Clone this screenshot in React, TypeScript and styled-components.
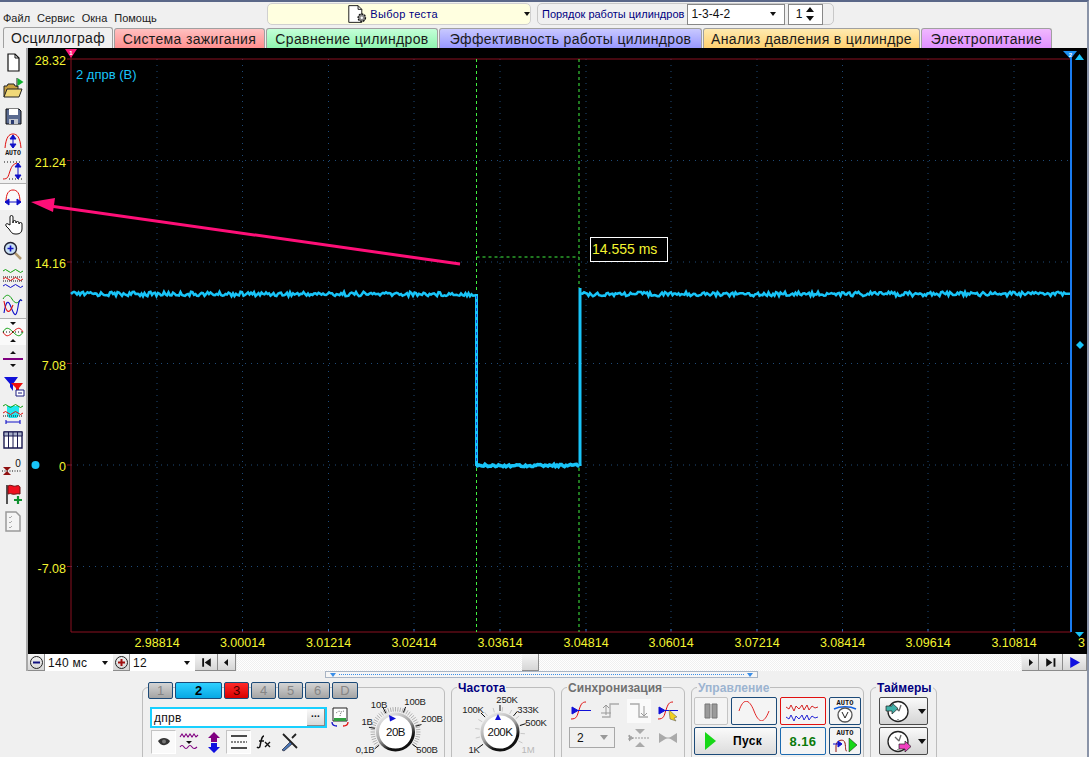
import { FC, ReactNode, useMemo } from "react";
import styled, { createGlobalStyle } from "styled-components";

const GlobalStyle = createGlobalStyle`
  html, body { margin: 0; padding: 0; background: #f0f0f0; }
  body { font-family: "Liberation Sans", Arial, sans-serif; }
`;

const Page = styled.div`
  width: 1089px;
  height: 757px;
  overflow: hidden;
  display: flex;
  flex-direction: column;
  background: #f0f0f0;
  border-top: 2px solid #5a6788;
  border-right: 2px solid #8a94a8;
  box-sizing: border-box;
  & > * {
    flex-shrink: 0;
  }
`;

/* ---------- top ---------- */
const TopBar = styled.div`
  height: 24px;
  padding-top: 1px;
  display: flex;
  box-sizing: content-box;
`;
const Menu = styled.div`
  width: 267px;
  padding: 9px 0 0 3px;
  box-sizing: border-box;
  display: flex;
  gap: 7px;
  font-size: 11px;
  color: #222;
`;
const TestSelect = styled.div`
  width: 264px;
  height: 22px;
  box-sizing: border-box;
  border: 1px solid #d0d0d0;
  border-radius: 5px;
  background: #ffffe0;
  display: flex;
  align-items: center;
  padding-left: 78px;
  gap: 2px;
  font-size: 11px;
  color: #000080;
  letter-spacing: 0.3px;
  white-space: nowrap;
`;
const Caret = styled.span<{ $left?: number; $big?: boolean; $color?: string }>`
  margin-left: ${(p) => p.$left ?? 0}px;
  width: 0;
  height: 0;
  border-left: ${(p) => (p.$big ? 4 : 3)}px solid transparent;
  border-right: ${(p) => (p.$big ? 4 : 3)}px solid transparent;
  border-top: ${(p) => (p.$big ? 5 : 4)}px solid ${(p) => p.$color ?? "#111"};
`;
const OrderBox = styled.div`
  margin-left: 6px;
  width: 297px;
  height: 22px;
  box-sizing: border-box;
  border: 1px solid #c8c8c8;
  border-radius: 5px;
  display: flex;
  align-items: center;
  padding-left: 4px;
  font-size: 11px;
  color: #000080;
  white-space: nowrap;
`;
const OrderField = styled.div<{ $w: number; $ml: number }>`
  width: ${(p) => p.$w}px;
  height: 21px;
  margin-left: ${(p) => p.$ml}px;
  box-sizing: border-box;
  border: 1px solid #888;
  background: #fff;
  display: flex;
  align-items: center;
  justify-content: space-between;
  padding: 0 8px 0 3px;
  color: #111;
  font-size: 12px;
`;
const SpinArrows = styled.svg`
  display: block;
`;

const TabRow = styled.div`
  height: 20px;
  display: flex;
  align-items: flex-end;
  padding-left: 3px;
  margin-top: 1px;
`;
const Tab = styled.div<{ $w: number; $from: string; $to: string; $active?: boolean }>`
  width: ${(p) => p.$w}px;
  height: ${(p) => (p.$active ? 21 : 20)}px;
  margin-right: 1px;
  box-sizing: border-box;
  border: 1px solid #a0a0a0;
  border-bottom: none;
  border-radius: 3px 3px 0 0;
  background: linear-gradient(${(p) => p.$from}, ${(p) => p.$to});
  display: flex;
  align-items: center;
  justify-content: center;
  font-size: 14px;
  letter-spacing: 0.35px;
  white-space: nowrap;
  color: #1a1a1a;
`;

/* ---------- middle ---------- */
const Body = styled.div`
  display: flex;
  height: 623px;
`;
const SideBar = styled.div`
  width: 28px;
  flex-shrink: 0;
  box-sizing: border-box;
  border-right: 2px solid #a8a8a8;
`;
const ToolButton = styled.div<{ $on?: boolean }>`
  width: 26px;
  height: 27px;
  box-sizing: border-box;
  display: flex;
  align-items: center;
  justify-content: center;
  ${(p) => p.$on && "background: #fafafa; border-top: 1px solid #b0b0b0;"}
`;
const Center = styled.div`
  width: 1059px;
  display: flex;
  flex-direction: column;
`;
const Plot = styled.svg`
  display: block;
  width: 1059px;
  height: 606px;
  flex-shrink: 0;
  background: #000;
  font-family: "Liberation Sans", Arial, sans-serif;
`;
const ScrollRow = styled.div`
  height: 17px;
  flex-shrink: 0;
  display: flex;
  background: #f0f0f0;
`;
const GrayBtn = styled.div<{ $w: number }>`
  width: ${(p) => p.$w}px;
  height: 17px;
  flex-shrink: 0;
  box-sizing: border-box;
  background: linear-gradient(#f4f4f4, #d6d6d6);
  border-right: 1px solid #8c8c8c;
  border-bottom: 1px solid #8c8c8c;
  display: flex;
  align-items: center;
  justify-content: center;
`;
const WhiteField = styled.div<{ $w: number }>`
  width: ${(p) => p.$w}px;
  height: 17px;
  flex-shrink: 0;
  box-sizing: border-box;
  background: #fff;
  display: flex;
  align-items: center;
  justify-content: space-between;
  padding: 0 5px 0 3px;
  font-size: 12px;
  color: #111;
  letter-spacing: 0.3px;
`;
const Track = styled.div`
  flex: 1;
  margin: 0 1px;
  display: flex;
  justify-content: flex-start;
  background-color: #fafafa;
  background-image: repeating-conic-gradient(#f0f0f0 0 25%, #fff 0 50%);
  background-size: 2px 2px;
  padding-left: 285px;
`;

/* ---------- bottom ---------- */
const Splitter = styled.div`
  margin-left: 325px;
  width: 433px;
  height: 7px;
  box-sizing: border-box;
  border: 1px solid #a8b4c4;
  background: #f6f6f6;
  display: flex;
  align-items: center;
  justify-content: space-between;
  padding: 0 4px;
`;
const SplitDots = styled.div`
  flex: 1;
  margin: 0 3px;
  border-top: 1px dotted #3a8ee8;
`;
const SplitTri = styled.span`
  width: 0;
  height: 0;
  border-left: 3px solid transparent;
  border-right: 3px solid transparent;
  border-top: 4px solid #3a8ee8;
`;
const Panels = styled.div`
  display: flex;
  gap: 6px;
  padding: 9px 0 0 142px;
`;
const Group = styled.div<{ $w: number }>`
  width: ${(p) => p.$w}px;
  height: 90px;
  box-sizing: border-box;
  border: 1px solid #bdbdbd;
  border-radius: 6px;
  flex-shrink: 0;
`;
const Legend = styled.div<{ $color: string }>`
  width: fit-content;
  margin: -6px 0 0 5px;
  padding: 0 1px;
  height: 13px;
  background: #f0f0f0;
  font-size: 12px;
  line-height: 13px;
  font-weight: bold;
  letter-spacing: 0.05px;
  color: ${(p) => p.$color};
`;
const ChannelBody = styled.div`
  display: flex;
`;
const ChannelLeft = styled.div`
  width: 210px;
  flex-shrink: 0;
  margin: -6px 0 0 5px;
`;
const ChannelRow = styled.div`
  display: flex;
  gap: 2px;
`;
const ChannelBtn = styled.div<{ $w?: number; $kind?: "on" | "red" }>`
  width: ${(p) => p.$w ?? 25}px;
  height: 17px;
  box-sizing: border-box;
  border: 1px solid #1c4a78;
  border-radius: 2px;
  display: flex;
  align-items: center;
  justify-content: center;
  font-size: 13px;
  background: ${(p) =>
    p.$kind === "on"
      ? "linear-gradient(#2ed0ff, #08a8e4)"
      : p.$kind === "red"
        ? "linear-gradient(#ff2a2a, #d80000)"
        : "linear-gradient(#d4d4d4, #a4a4a4)"};
  color: ${(p) => (p.$kind === "on" ? "#000" : p.$kind === "red" ? "#400" : "#868686")};
  font-weight: ${(p) => (p.$kind === "on" ? "bold" : "normal")};
`;
const NameRow = styled.div`
  margin: 8px 0 0 2px;
  display: flex;
  align-items: center;
  gap: 3px;
`;
const NameInput = styled.div`
  width: 177px;
  height: 21px;
  box-sizing: border-box;
  border: 2px solid #18d0ff;
  background: #fff;
  display: flex;
  align-items: center;
  justify-content: space-between;
  padding-left: 2px;
  font-size: 12px;
  letter-spacing: 0.3px;
  color: #111;
`;
const MoreBtn = styled.div`
  width: 18px;
  height: 17px;
  background: linear-gradient(#fafafa, #d8d8d8);
  border-right: 1px solid #888;
  border-bottom: 1px solid #888;
  box-sizing: border-box;
  font-size: 10px;
  font-weight: bold;
  line-height: 10px;
  text-align: center;
`;
const ChannelIcons = styled.div`
  margin: 2px 0 0 3px;
  display: flex;
`;
const ChanIcon = styled.div<{ $on?: boolean }>`
  width: 25px;
  height: 24px;
  box-sizing: border-box;
  display: flex;
  align-items: center;
  justify-content: center;
  ${(p) => p.$on && "background: #fafafa; border: 1px solid #c4c4c4; border-right-color: #fff; border-bottom-color: #fff;"}
`;
const KnobSvg = styled.svg`
  display: block;
  flex-shrink: 0;
  overflow: visible;
  font-family: "Liberation Sans", Arial, sans-serif;
`;
const SyncGrid = styled.div`
  margin: 2px 0 0 7px;
  display: grid;
  grid-template-columns: repeat(4, 24px);
  column-gap: 5px;
  grid-auto-rows: 27px;
  align-items: center;
  justify-items: center;
`;
const SyncSelect = styled.div`
  grid-column: span 2;
  justify-self: start;
  width: 46px;
  height: 21px;
  box-sizing: border-box;
  border: 1px solid #a8a8a8;
  display: flex;
  align-items: center;
  justify-content: space-between;
  padding: 0 6px 0 7px;
  font-size: 12px;
  color: #111;
`;
const HatchCell = styled.div`
  width: 24px;
  height: 24px;
  background: #fafafa;
  display: flex;
  align-items: center;
  justify-content: center;
`;
const ControlGrid = styled.div`
  margin: 2px 0 0 2px;
  display: grid;
  grid-template-columns: 34px 46px 46px 32px;
  grid-auto-rows: 28px;
  column-gap: 3px;
  row-gap: 2px;
`;
const CtlBtn = styled.div<{ $span?: number; $border?: string; $light?: boolean }>`
  grid-column: span ${(p) => p.$span ?? 1};
  box-sizing: border-box;
  border: 1px solid ${(p) => p.$border ?? "#1c4a78"};
  border-radius: 2px;
  background: ${(p) => (p.$light ? "#f4f4f4" : "linear-gradient(#fafafa, #dcdcdc)")};
  display: flex;
  align-items: center;
  justify-content: center;
  font-size: 12px;
  font-weight: bold;
`;
const RunBtn = styled(CtlBtn)`
  justify-content: flex-start;
  padding-left: 10px;
  gap: 17px;
  letter-spacing: 0.4px;
`;
const Counter = styled.span`
  color: #0a7a0a;
  font-size: 13px;
  letter-spacing: 0.4px;
`;
const TimerCol = styled.div`
  margin: 2px 0 0 8px;
  width: 49px;
  display: flex;
  flex-direction: column;
  gap: 2px;
`;
const TimerBtn = styled.div`
  height: 28px;
  box-sizing: border-box;
  border: 1px solid #4a4a4a;
  border-radius: 2px;
  background: linear-gradient(#fafafa, #d4d4d4);
  display: flex;
  align-items: center;
  gap: 6px;
  padding-left: 5px;
`;

/* ---------- icons ---------- */
const Ico: FC<{ children: ReactNode; s?: number }> = ({ children, s = 24 }) => (
  <svg width={s} height={s} viewBox="0 0 24 24" fill="none">
    {children}
  </svg>
);
const BlueV = ({ x = 12, a = 5, b = 19 }) => (
  <path d={`M${x} ${a}V${b}M${x - 3} ${a + 4}L${x} ${a}L${x + 3} ${a + 4}ZM${x - 3} ${b - 4}L${x} ${b}L${x + 3} ${b - 4}Z`} stroke="#1010c8" strokeWidth="1" fill="#1010c8" />
);
const Wave = ({ y, c, dash }: { y: number; c: string; dash?: boolean }) => (
  <path d={`M2 ${y}q2.5 -3 5 0t5 0t5 0t5 0`} stroke={c} strokeWidth="1" strokeDasharray={dash ? "1 1" : undefined} />
);

const tools: { on?: boolean; node: ReactNode }[] = [
  { node: <Ico><path d="M7 4h7l4 4v13H7z" fill="#fff" stroke="#111" strokeWidth="1.200" /><path d="M14 4v4h4" stroke="#111" /></Ico> },
  { node: <Ico><path d="M3 20V9h3l1-2h6l1 2h3v3" fill="#c8a040" stroke="#222" /><path d="M3 20l3-8h15l-3 8z" fill="#f0d878" stroke="#222" /><path d="M16 1v9" stroke="#222" /><path d="M16.500 1l6 4-6 4z" fill="#10b030" /></Ico> },
  { node: <Ico><path d="M5 5h13l2 2v13H5z" fill="#5a6a90" stroke="#111" /><path d="M8 5h9v6H8z" fill="#fff" /><path d="M8 15h9v5H8z" fill="#c4c8d0" /><path d="M10 16h3v4h-3z" fill="#2a3a70" /></Ico> },
  { node: <Ico><path d="M4 17C5 6 8 3 12 3s7 3 8 14" stroke="#e01010" strokeWidth="1" /><BlueV a={4} b={17} /><text x="12" y="23.500" textAnchor="middle" fontSize="6.500" fontWeight="bold" fontFamily="Liberation Mono" fill="#111">AUTO</text></Ico> },
  { node: <Ico><path d="M2 21c5 0 5-2 7-8s4-7 7-8" stroke="#e01010" strokeWidth="1" /><path d="M3 4h18M8 21h14" stroke="#111" strokeDasharray="1 2" /><BlueV x={17} a={5} b={21} /></Ico> },
  { on: true, node: <Ico><path d="M5 17C5 8 8 5 12 5s7 3 7 12" stroke="#e01010" strokeWidth="1" /><path d="M4 17H20M8 14L4 17l4 3zM16 14L20 17l-4 3z" stroke="#1010c8" strokeWidth="1" fill="#1010c8" /></Ico> },
  { node: <Ico><path d="M9 13V5a1.500 1.500 0 013 0v6-1a1.500 1.500 0 013 0v1a1.500 1.500 0 013 0v1a1.500 1.500 0 013 0v5c0 3-2 5-5 5h-2c-3 0-4-2-6-5l-3-3c-1-2 1-3 2-2z" fill="#fff" stroke="#111" strokeWidth="1" /></Ico> },
  { node: <Ico><path d="M14 14l6 6" stroke="#b09870" strokeWidth="2.500" /><circle cx="9.500" cy="9.500" r="6" fill="#c8e0f4" stroke="#223" strokeWidth="1.400" /><path d="M6.500 9.500h6M9.500 6.500v6" stroke="#1010c8" strokeWidth="1.600" /></Ico> },
  { node: <Ico><Wave y={5} c="#10a010" /><path d="M2 11h20" stroke="#111" strokeDasharray="1 1" /><Wave y={13} c="#e01010" /><path d="M2 15h20" stroke="#111" strokeDasharray="1 1" /><Wave y={20} c="#1010c8" /></Ico> },
  { node: <Ico><path d="M2 6c3-5 6-5 9 0s6 5 9 0" stroke="#10a010" strokeWidth="1" /><path d="M3 20c2-12 4-14 7-6s5 12 7 0c1-8 3-8 4-6" stroke="#1010c8" strokeWidth="1.100" /><path d="M3 8c2 12 5 14 9 4" stroke="#e01010" strokeWidth="1.100" /></Ico> },
  { on: true, node: <Ico><path d="M9 2h6l-3 3zM9 22h6l-3-3z" fill="#111" /><path d="M2 12c3-5 5-5 10 0s7 5 10 0" stroke="#10a010" strokeWidth="1" /><path d="M2 12c3 5 5 5 10 0s7-5 10 0" stroke="#e01010" strokeWidth="1" /><path d="M2 12h20" stroke="#111" strokeDasharray="1 2" /></Ico> },
  { node: <Ico><path d="M9 7l3-3 3 3zM9 17l3 3 3-3z" fill="#111" /><path d="M2 12h20" stroke="#800080" strokeWidth="2" /></Ico> },
  { node: <Ico><path d="M3 3h14l-5 7v7l-3-4V10z" fill="#1010d8" /><path d="M10 9h12l-4 5v5h-3v-5z" fill="#f01010" /><path d="M15 16h8v6h-8z" fill="#fff" stroke="#1a1a80" /><path d="M17 19h4" stroke="#1a1a80" /></Ico> },
  { node: <Ico><path d="M6 5h12v9l-2 3H8l-2-3z" fill="#20e8f0" /><Wave y={5} c="#10a010" /><Wave y={12} c="#e01010" /><path d="M2 15h20" stroke="#111" strokeDasharray="1 1" /><path d="M5 21h14M5 19v4M19 19v4" stroke="#1010c8" strokeWidth="1.100" /></Ico> },
  { node: <Ico><path d="M3 4h18v16H3z" fill="#fff" stroke="#1a1a50" strokeWidth="1.400" /><path d="M3 4h18v4H3z" fill="#a8b0c8" stroke="#1a1a50" /><path d="M7.500 4v16M12 4v16M16.500 4v16" stroke="#1a1a50" strokeWidth="1" /></Ico> },
  { node: <Ico><path d="M2 12l4 4 4-4zM2 20l4-4 4 4z" fill="#901010" /><path d="M1 16h20" stroke="#111" strokeDasharray="1 1.500" /><text x="17" y="12" textAnchor="middle" fontSize="10" fill="#111" fontFamily="Liberation Sans">0</text></Ico> },
  { node: <Ico><path d="M6 3v19" stroke="#111" strokeWidth="1.400" /><path d="M7 4c3-2 5 1 8 0s3 0 4 1v7c-3-1-5 1-8 0-2-1-3 0-4 0z" fill="#f01020" stroke="#701010" /><path d="M17 14v8M13 18h8" stroke="#109030" strokeWidth="2.200" /></Ico> },
  { node: <Ico><path d="M5 3h10l4 4v15H5z" fill="#f4f4f4" stroke="#999" strokeWidth="1.500" /><path d="M8 8l1 1 2-2M8 13l1 1 2-2M8 18l1 1 2-2" stroke="#aaa" /></Ico> },
];

/* ---------- knobs ---------- */
type KnobLabel = { t: string; x: number; y: number; c?: string };
const polar = (cx: number, cy: number, r: number, deg: number) => {
  const a = ((deg - 90) * Math.PI) / 180;
  return [cx + r * Math.cos(a), cy + r * Math.sin(a)];
};

const Knob: FC<{
  id: string; box: string; w: number; cx: number; cy: number; value: string; pointer: string;
  labels: KnobLabel[]; majors: number[]; minorStep: number; minorColor: string;
}> = ({ id, box, w, cx, cy, value, pointer, labels, majors, minorStep, minorColor }) => {
  const minors: number[] = [];
  for (let a = -126; a <= 126; a += minorStep) minors.push(a);
  return (
    <KnobSvg width={w} height={67} viewBox={box}>
      <defs>
        <linearGradient id={id} x1="0.15" y1="0" x2="0.75" y2="1">
          <stop offset="0" stopColor="#eeeeee" />
          <stop offset="0.5" stopColor="#a0a0a0" />
          <stop offset="0.8" stopColor="#111" />
        </linearGradient>
      </defs>
      {minors.map((a) => {
        const [x1, y1] = polar(cx, cy, 20.5, a);
        const [x2, y2] = polar(cx, cy, 25, a);
        return <line key={a} x1={x1} y1={y1} x2={x2} y2={y2} stroke={minorColor} strokeWidth="1" />;
      })}
      {majors.map((a) => {
        const [x1, y1] = polar(cx, cy, 21, a);
        const [x2, y2] = polar(cx, cy, 27, a);
        return <line key={a} x1={x1} y1={y1} x2={x2} y2={y2} stroke="#111" strokeWidth="1" />;
      })}
      <circle cx={cx} cy={cy} r={18} fill="#fff" stroke={`url(#${id})`} strokeWidth="3" />
      <path d={pointer} fill="#1010d8" />
      <text x={cx} y={cy + 4} textAnchor="middle" fontSize="11.500" fill="#111" letterSpacing="-0.500">{value}</text>
      {labels.map((l) => (
        <text key={l.t} x={l.x} y={l.y} textAnchor="middle" fontSize="9.500" letterSpacing="-0.200" fill={l.c ?? "#222"}>{l.t}</text>
      ))}
    </KnobSvg>
  );
};

/* ---------- scope ---------- */
const rnd = (i: number) => {
  const x = Math.sin(i * 12.9898) * 43758.5453;
  return x - Math.floor(x);
};
const noisy = (from: number, to: number, y: number, amp: number) => {
  let d = "";
  for (let x = from, i = from; x <= to; x += 1.5, i++) {
    d += `${d ? "L" : "M"}${x} ${(y + (rnd(i) - 0.5) * amp).toFixed(1)}`;
  }
  return d;
};

const xTicks = [
  [157, "2.98814"], [242.5, "3.00014"], [328.5, "3.01214"], [414, "3.02414"], [500, "3.03614"], [586, "3.04814"],
  [671, "3.06014"], [757, "3.07214"], [842.5, "3.08414"], [928, "3.09614"], [1014, "3.10814"],
] as const;
const yTicks = [
  [59, "28.32"], [160.5, "21.24"], [262, "14.16"], [363.5, "7.08"], [465, "0"], [566.5, "-7.08"],
] as const;
const YELLOW = "#f4f430";
const CYAN = "#18c4f8";

const Scope: FC = () => {
  const left = useMemo(() => noisy(71, 476, 294, 4.5), []);
  const right = useMemo(() => noisy(581, 1071, 294, 4.5), []);
  const low = useMemo(() => noisy(476, 580, 465.5, 2.5), []);
  return (
    <Plot viewBox="28 48 1059 606">
      {yTicks.slice(1).map(([y]) => (
        <line key={y} x1={71} x2={1071} y1={y} y2={y} stroke="#1f4a78" strokeDasharray="1 5" />
      ))}
      {xTicks.map(([x]) => (
        <line key={x} x1={x} x2={x} y1={59} y2={632} stroke="#1f4a78" strokeDasharray="1 5" />
      ))}
      {yTicks.map(([y, t]) => (
        <g key={t}>
          <line x1={67} x2={71} y1={y} y2={y} stroke="#8a1020" />
          <text x={66} y={y + 6} textAnchor="end" fontSize="12.500" fill={YELLOW}>{t}</text>
        </g>
      ))}
      {xTicks.map(([x, t]) => (
        <g key={t}>
          <line x1={x} x2={x} y1={629} y2={632} stroke="#2a68b0" />
          <text x={x} y={647} textAnchor="middle" fontSize="12.500" fill={YELLOW}>{t}</text>
        </g>
      ))}
      <text x={1078} y={647} fontSize="12.500" fill={YELLOW}>3</text>
      <path d="M71 59H1071M71 632H1071M71 49V632" stroke="#8a1020" fill="none" />
      <line x1={1071} x2={1071} y1={52} y2={632} stroke="#1a7cf0" strokeWidth="2" />

      <path d={left} stroke={CYAN} strokeWidth="2.500" fill="none" />
      <path d={right} stroke={CYAN} strokeWidth="2.500" fill="none" />
      <path d={low} stroke={CYAN} strokeWidth="3.500" fill="none" />
      <path d="M476.500 294V466M580 288V466" stroke={CYAN} strokeWidth="3" fill="none" />
      <path d="M476.500 59V292M476.500 468V632M579 59V288M579 468V632M476.500 257H579" stroke="#40f040" strokeDasharray="3 3" fill="none" />
      <path d="M476.500 296V464" stroke="#1440d8" strokeDasharray="3 3" />

      <rect x={590.500} y={237.500} width={77} height={24} fill="#000" stroke="#fff" />
      <text x={592} y={254} fontSize="14" fill={YELLOW}>14.555 ms</text>
      <text x={76} y={79} fontSize="13" fill={CYAN}>2 дпрв (В)</text>

      <path d="M460 264L50 206" stroke="#ff0f78" strokeWidth="3" />
      <path d="M31 202L55 198L53 212Z" fill="#ff0f78" />

      <path d="M65 49H77L71 58Z" fill="#ff1878" />
      <text x={71} y={55} textAnchor="middle" fontSize="6" fontWeight="bold" fill="#fff">1</text>
      <path d="M1063 51H1077L1070.500 59Z" fill="#1e90f0" />
      <text x={1070.500} y={56.500} textAnchor="middle" fontSize="6" fontWeight="bold" fill="#fff">2</text>
      <path d="M1075 60L1079.500 54L1084 60Z" fill={CYAN} />
      <path d="M1075 632H1084L1079.500 637Z" fill={CYAN} />
      <path d="M1080 341L1084 345L1080 349L1076 345Z" fill={CYAN} />
      <circle cx={35.500} cy={465} r={4} fill={CYAN} />
    </Plot>
  );
};

const Tri = ({ d, c = "#111", s = 9 }: { d: string; c?: string; s?: number }) => (
  <svg width={s} height={s} viewBox="0 0 9 9"><path d={d} fill={c} /></svg>
);

const Clock: FC<{ out?: boolean }> = ({ out }) => (
  <svg width="27" height="25" viewBox="0 0 27 25" fill="none">
    <circle cx="13" cy="12.500" r="10" fill="#fff" stroke="#222" strokeWidth="1.300" />
    <path d="M14 12l2-6M14 12l-4-4M13 20v1" stroke="#666" strokeWidth="1.300" />
    {out ? (
      <path d="M14 15h6v-3l6 5.500-6 5.500v-3h-6z" fill="#f040c0" stroke="#222" strokeWidth="0.700" />
    ) : (
      <path d="M1 7h6V4l6 5.500-6 5.500v-3H1z" fill="#40b0a8" stroke="#222" strokeWidth="0.700" />
    )}
  </svg>
);

const App: FC = () => (
  <Page>
    <GlobalStyle />
    <TopBar>
      <Menu>
        <span>Файл</span>
        <span>Сервис</span>
        <span>Окна</span>
        <span>Помощь</span>
      </Menu>
      <TestSelect>
        <svg width="24" height="20" viewBox="0 0 24 20" fill="none">
          <path d="M3 1h10l4 4v14H3z" fill="#fff" stroke="#111" />
          <path d="M13 1v4h4" stroke="#111" />
          <circle cx="17" cy="14" r="4" fill="#888" stroke="#111" strokeDasharray="2 1" strokeWidth="1.400" />
          <circle cx="17" cy="14" r="1.300" fill="#fff" />
        </svg>
        <span>Выбор теста</span>
        <Caret $left={84} />
      </TestSelect>
      <OrderBox>
        <span>Порядок работы цилиндров</span>
        <OrderField $w={98} $ml={3}>
          1-3-4-2
          <Caret />
        </OrderField>
        <OrderField $w={35} $ml={3}>
          &nbsp;1
          <SpinArrows width="8" height="16" viewBox="0 0 8 16">
            <path d="M0 6l4-5 4 5zM0 10l4 5 4-5z" fill="#111" />
          </SpinArrows>
        </OrderField>
      </OrderBox>
    </TopBar>

    <TabRow>
      <Tab $w={110} $from="#f0f0f0" $to="#f0f0f0" $active>Осциллограф</Tab>
      <Tab $w={151} $from="#ffc0c0" $to="#ff8f8f">Система зажигания</Tab>
      <Tab $w={172} $from="#c4ffd8" $to="#8ff5b0">Сравнение цилиндров</Tab>
      <Tab $w={263} $from="#c8c8ff" $to="#9898ff">Эффективность работы цилиндров</Tab>
      <Tab $w={217} $from="#ffeab0" $to="#ffd070">Анализ давления в цилиндре</Tab>
      <Tab $w={131} $from="#f0b8ff" $to="#e090ff">Электропитание</Tab>
    </TabRow>

    <Body>
      <SideBar>
        {tools.map((t, i) => (
          <ToolButton key={i} $on={t.on}>{t.node}</ToolButton>
        ))}
      </SideBar>
      <Center>
        <Scope />
        <ScrollRow>
          <GrayBtn $w={17}>
            <svg width="15" height="15" viewBox="0 0 15 15" fill="none"><circle cx="7.500" cy="7.500" r="6" stroke="#222" /><path d="M4 7.500h7" stroke="#101080" strokeWidth="2" /></svg>
          </GrayBtn>
          <WhiteField $w={68}>140 мс<Caret /></WhiteField>
          <GrayBtn $w={17}>
            <svg width="15" height="15" viewBox="0 0 15 15" fill="none"><circle cx="7.500" cy="7.500" r="6" stroke="#222" /><path d="M4 7.500h7M7.500 4v7" stroke="#a01010" strokeWidth="2" /></svg>
          </GrayBtn>
          <WhiteField $w={65}>12<Caret /></WhiteField>
          <GrayBtn $w={23}><Tri s={11} d="M1 1h1.500v7H1zM8 1v7L3 4.500z" /></GrayBtn>
          <GrayBtn $w={18}><Tri d="M6 1v7L2 4.500z" /></GrayBtn>
          <Track><GrayBtn $w={17} /></Track>
          <GrayBtn $w={17}><Tri d="M3 1v7l4-3.500z" /></GrayBtn>
          <GrayBtn $w={24}><Tri s={11} d="M1 1v7l5-3.500zM7 1h1.500v7H7z" /></GrayBtn>
          <GrayBtn $w={24}><Tri s={11} c="#1010e0" d="M1 0v9l8-4.500z" /></GrayBtn>
        </ScrollRow>
      </Center>
    </Body>

    <Splitter>
      <SplitTri />
      <SplitDots />
      <SplitTri />
    </Splitter>

    <Panels>
      <Group $w={303}>
        <ChannelBody>
          <ChannelLeft>
            <ChannelRow>
              <ChannelBtn>1</ChannelBtn>
              <ChannelBtn $w={47} $kind="on">2</ChannelBtn>
              <ChannelBtn $kind="red">3</ChannelBtn>
              <ChannelBtn>4</ChannelBtn>
              <ChannelBtn>5</ChannelBtn>
              <ChannelBtn>6</ChannelBtn>
              <ChannelBtn $w={26}>D</ChannelBtn>
            </ChannelRow>
            <NameRow>
              <NameInput>
                дпрв
                <MoreBtn>...</MoreBtn>
              </NameInput>
              <svg width="20" height="21" viewBox="0 0 20 21" fill="none">
                <path d="M3 1h14v13H3z" fill="#fff" stroke="#222" />
                <path d="M4 11h12v3H4z" fill="#30a040" />
                <path d="M6 6l3-2 2 1 3-1M10 9l1-4" stroke="#777" strokeDasharray="1 1" />
                <path d="M2 15c0 3 2 4 5 4" stroke="#1010c8" strokeWidth="1.300" />
                <path d="M18 15c0 3-2 4-5 4" stroke="#e01010" strokeWidth="1.300" />
              </svg>
            </NameRow>
            <ChannelIcons>
              <ChanIcon $on>
                <svg width="14" height="10" viewBox="0 0 14 10"><path d="M1 4c3-4 9-4 12 0-2 5-9 6-12 0z" fill="#333" /><circle cx="7" cy="4.500" r="2" fill="#777" /></svg>
              </ChanIcon>
              <ChanIcon>
                <svg width="20" height="20" viewBox="0 0 20 20" fill="none"><path d="M1 5l2-3 2 3 2-3 2 3 2-3 2 3 2-3 2 3 2-2M1 15q2-3 4 0t4 0 4 0 5 0" stroke="#800080" strokeWidth="1.100" /><path d="M7 9h6l-3 3z" fill="#111" /></svg>
              </ChanIcon>
              <ChanIcon>
                <svg width="18" height="21" viewBox="0 0 18 21"><path d="M9 0l6 6h-3v4H6V6H3z" fill="#800080" /><path d="M9 21l6-6h-3v-4H6v4H3z" fill="#1010e0" /></svg>
              </ChanIcon>
              <ChanIcon $on>
                <svg width="20" height="16" viewBox="0 0 20 16" fill="none"><path d="M2 2h16M2 14h16" stroke="#111" strokeWidth="1.300" /><path d="M2 8h16" stroke="#111" strokeDasharray="2 1" /></svg>
              </ChanIcon>
              <ChanIcon>
                <svg width="16" height="14" viewBox="0 0 16 14" fill="none"><path d="M8 1c-2 0-2 2-3 5l-1 5c0 2-2 2-3 1M3 6h5" stroke="#111" strokeWidth="1.500" /><path d="M9 7l5 5M14 7l-5 5" stroke="#111" strokeWidth="1.400" /></svg>
              </ChanIcon>
              <ChanIcon>
                <svg width="20" height="20" viewBox="0 0 20 20" fill="none"><path d="M4 2l14 14M17 2l-4 4" stroke="#222" strokeWidth="1.800" /><path d="M3 18l8-8 2 2-8 7z" fill="#4a78b8" stroke="#223" strokeWidth="0.700" /></svg>
              </ChanIcon>
            </ChannelIcons>
          </ChannelLeft>
          <Knob
            id="kv" box="358 688 87 67" w={87} cx={395.5} cy={732} value="20В" pointer="M389 715l7 3.500-6 3z"
            minorStep={6} minorColor="#b0b0b0" majors={[-129, -80, -27, 22, 74, 126]}
            labels={[
              { t: "10В", x: 379, y: 708 }, { t: "100В", x: 415, y: 704.5 }, { t: "1В", x: 367, y: 725 },
              { t: "200В", x: 432, y: 722 }, { t: "0,1В", x: 365, y: 753 }, { t: "500В", x: 427, y: 753 },
            ]}
          />
        </ChannelBody>
      </Group>

      <Group $w={104}>
        <Legend $color="#000080">Частота</Legend>
        <Knob
          id="kf" box="452 695 102 67" w={102} cx={500} cy={732} value="200K" pointer="M495 720l3-6 3 6z"
          minorStep={22} minorColor="#c8c8c8" majors={[-126, -45, 0, 40, 72]}
          labels={[
            { t: "250K", x: 507, y: 703 }, { t: "100K", x: 473, y: 713 }, { t: "333K", x: 528, y: 713 },
            { t: "500K", x: 536, y: 726 }, { t: "1K", x: 474, y: 753 }, { t: "1M", x: 528, y: 753, c: "#b8b8b8" },
          ]}
        />
      </Group>

      <Group $w={124}>
        <Legend $color="#707070">Синхронизация</Legend>
        <SyncGrid>
          <svg width="24" height="24" viewBox="0 0 24 24" fill="none"><path d="M2 20c6 0 6-3 8-9s3-8 7-8" stroke="#e01010" /><path d="M3 8l6 3.500-6 3.500zM9 11.500h13" stroke="#1010d8" fill="#1010d8" /></svg>
          <svg width="24" height="24" viewBox="0 0 24 24" fill="none"><path d="M4 18h8V5h9" stroke="#aaa" strokeWidth="1.300" /><path d="M5 9l3-3 3 3M8 7v9M3 14h10" stroke="#999" /></svg>
          <HatchCell>
            <svg width="24" height="24" viewBox="0 0 24 24" fill="none"><path d="M3 5h9v13h9" stroke="#aaa" strokeWidth="1.300" /><path d="M14 14l3 3 3-3M17 7v9" stroke="#999" /></svg>
          </HatchCell>
          <svg width="24" height="24" viewBox="0 0 24 24" fill="none"><path d="M2 20c6 0 6-3 8-9s3-8 7-8" stroke="#e01010" /><path d="M3 8l6 3.500-6 3.500zM9 11.500h13" stroke="#1010d8" fill="#1010d8" /><path d="M13 11l8 7-3 1 2 3-6-2z" fill="#f0d020" stroke="#555" strokeWidth="0.500" /></svg>
          <SyncSelect>2<Caret $big $color="#999" /></SyncSelect>
          <svg width="24" height="24" viewBox="0 0 24 24" fill="none"><path d="M8 3h10l-5 5zM8 21h10l-5-5z" fill="#aaa" /><path d="M2 12h21M2 9v6l4-3z" stroke="#999" strokeDasharray="2 1" fill="#aaa" /></svg>
          <svg width="24" height="24" viewBox="0 0 24 24" fill="none"><path d="M3 7l8 5-8 5zM21 7l-8 5 8 5z" fill="#aaa" /><path d="M3 12h18" stroke="#aaa" /></svg>
        </SyncGrid>
      </Group>

      <Group $w={173}>
        <Legend $color="#9cb4d0">Управление</Legend>
        <ControlGrid>
          <CtlBtn $border="#c4c4c4" $light>
            <svg width="14" height="18" viewBox="0 0 14 18"><path d="M1 2h5v14H1zM8 2h5v14H8z" fill="#9a9a9a" stroke="#777" /></svg>
          </CtlBtn>
          <CtlBtn $light>
            <svg width="32" height="20" viewBox="0 0 32 20" fill="none"><path d="M1 10c4-13 10-13 15 0s10 13 15 0" stroke="#e01010" strokeWidth="0.900" /></svg>
          </CtlBtn>
          <CtlBtn $border="#e01010" $light>
            <svg width="36" height="20" viewBox="0 0 36 20" fill="none"><path d="M1 6l3 2 2-4 3 6 2-5 3 3 3-4 2 5 3-5 2 5 3-4 3 2 3-1" stroke="#d01010" strokeWidth="0.900" /><path d="M1 16l3 2 2-4 3 6 2-5 3 3 3-4 2 5 3-5 2 5 3-4 3 2 3-1" stroke="#1010d0" strokeWidth="0.900" /></svg>
          </CtlBtn>
          <CtlBtn $light>
            <svg width="26" height="26" viewBox="0 0 26 26" fill="none"><text x="13" y="7" textAnchor="middle" fontSize="7" fontWeight="bold" fontFamily="Liberation Mono" fill="#111">AUTO</text><path d="M2 11c6-3 16-3 22 0" stroke="#1060e0" strokeWidth="1.400" /><circle cx="13" cy="17" r="7" fill="#fff" stroke="#555" strokeWidth="1.300" /><path d="M10 14l3 6 3-6" stroke="#222" /></svg>
          </CtlBtn>
          <RunBtn $span={2}>
            <svg width="11" height="18" viewBox="0 0 11 18"><path d="M0 0l11 9L0 18z" fill="#18d818" /></svg>
            <span>Пуск</span>
          </RunBtn>
          <CtlBtn $border="#1c6ab0" $light><Counter>8.16</Counter></CtlBtn>
          <CtlBtn $light>
            <svg width="26" height="26" viewBox="0 0 26 26" fill="none"><text x="13" y="7" textAnchor="middle" fontSize="7" fontWeight="bold" fontFamily="Liberation Mono" fill="#111">AUTO</text><path d="M4 24v-6c0-6 8-8 9-3s0 8 2 8" stroke="#901010" /><path d="M1 16h7M6 13l4 3-4 3z" stroke="#1010d0" fill="#1010d0" /><path d="M17 10l8 7-8 7z" fill="#18d818" stroke="#111" strokeWidth="0.500" /></svg>
          </CtlBtn>
        </ControlGrid>
      </Group>

      <Group $w={67}>
        <Legend $color="#000080">Таймеры</Legend>
        <TimerCol>
          <TimerBtn><Clock /><Caret $big /></TimerBtn>
          <TimerBtn><Clock out /><Caret $big /></TimerBtn>
        </TimerCol>
      </Group>
    </Panels>
  </Page>
);

export default App;
